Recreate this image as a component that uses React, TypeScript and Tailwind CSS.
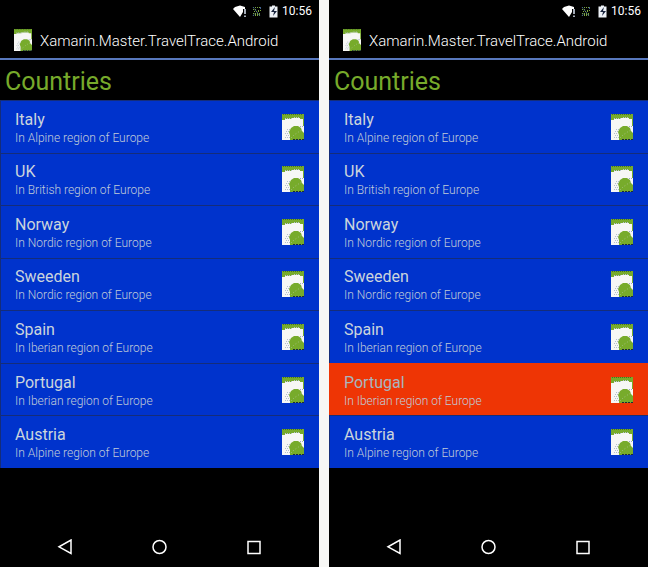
const countries = [
  { name: 'Italy', region: 'Alpine' },
  { name: 'UK', region: 'British' },
  { name: 'Norway', region: 'Nordic' },
  { name: 'Sweeden', region: 'Nordic' },
  { name: 'Spain', region: 'Iberian' },
  { name: 'Portugal', region: 'Iberian' },
  { name: 'Austria', region: 'Alpine' },
];

function AppIcon({ className }: { className: string }) {
  return (
    <svg viewBox="0 0 22 26" preserveAspectRatio="none" className={className} aria-hidden="true">
      <path d="M0 0h22v26H0z" fill="#f7f7f5" />
      <path d="M0 0h22v12h-1V5h-3V4H9v1H3v1H0z" fill="#77ab2b" />
      <path d="M8 26v-5l-1-3 2-4 3-2h4l3 2 1 3 2 2v7z" fill="#77ab2b" />
      <path d="M1 .5h20" stroke="#48721f" strokeDasharray="1 1" />
      <path d="M3 4.500h7M12 3.500h5" stroke="#b7c5d2" strokeDasharray="1 1" />
      <path d="M5 15.500h3M4 17.500h3M3 19.500h4M4 21.500h3M3 23.500h5" stroke="#b3bfce" strokeDasharray="1 1" />
      <path d="M9 24l3-3 3-2 3-2 3-1" fill="none" stroke="#a3bf82" strokeDasharray="1 2" />
      <path d="M18 12.500h3" stroke="#9cabc2" strokeDasharray="1 1" />
      <path d="M11 25.500h11" stroke="#1b2a3a" strokeDasharray="2 1" />
    </svg>
  );
}

function StatusBar() {
  return (
    <div className="flex h-[22px] items-center justify-end pr-[7px] text-white">
      <svg viewBox="0 0 46 14" className="mr-[3px] h-[14px] w-[46px]" aria-hidden="true">
        <path d="M0 5l2-2 5-1.500 5 1.500v2h-2v3l-3 5z" fill="#fff" />
        <path d="M12 5v5M12 11.500v1.500" stroke="#dce5f4" strokeWidth="1.500" />
        <path d="M20 3.500h7M20 5.500h4M21 7.500h5M20 9.500h7M20 11.500h8M25 6.500h3M22 10.500h5" stroke="#7ba640" strokeDasharray="1 1" />
        <path d="M20 3l7 9M20 12l2-3M27.500 3v3" fill="none" stroke="#40618c" strokeDasharray="2 1" />
        <path d="M39 1.500h3v1h2.500v11h-8v-11H39z" fill="#eef2f7" />
        <path d="M42 3l-4 5h3l-1 4 4-5h-3z" fill="#18233c" />
      </svg>
      <time className="text-xs leading-4">10:56</time>
    </div>
  );
}

function NavigationBar() {
  const button = 'flex size-4 items-center justify-center';
  return (
    <nav aria-label="System" className="mt-auto flex h-10 items-center justify-between px-[57px]">
      <button type="button" aria-label="Back" className={button}>
        <svg viewBox="0 0 16 16" className="size-4"><path d="M14 1v13.500L2 7.800z" fill="none" stroke="#fff" strokeWidth="1.500" /></svg>
      </button>
      <button type="button" aria-label="Home" className={button}>
        <svg viewBox="0 0 16 16" className="size-4"><circle cx="7.500" cy="8" r="6.500" fill="none" stroke="#fff" strokeWidth="1.500" /></svg>
      </button>
      <button type="button" aria-label="Recent apps" className={button}>
        <svg viewBox="0 0 16 16" className="size-4"><path d="M2 2.500h12v12H2z" fill="none" stroke="#fff" strokeWidth="1.500" /></svg>
      </button>
    </nav>
  );
}

function Phone({ selected }: { selected?: string }) {
  return (
    <section className="flex min-w-0 flex-1 flex-col bg-black">
      <StatusBar />
      <header className="flex h-[38px] items-center gap-2 border-b-2 border-[#5878bd] pl-[14px] text-white">
        <AppIcon className="h-[22px] w-[18px] shrink-0" />
        <span className="truncate pt-px text-[15px] leading-5 font-light">Xamarin.Master.TravelTrace.Android</span>
      </header>
      <h1 className="flex h-10 items-center px-[5px] pt-1 text-[25px] leading-8 text-[#77aa2b]">Countries</h1>
      <ul className="grid h-[368px] auto-rows-fr">
        {countries.map(({ name, region }) => (
          <li key={name} className="flex">
            <button
              type="button"
              aria-pressed={name === selected}
              className={`flex w-full items-center justify-between border-t border-l pr-[15px] pl-[14px] text-left ${
                name === selected ? 'border-[#ee3505] bg-[#ee3505] text-[#a9b6bf]' : 'border-[#152d79] bg-[#0033cc] text-[#cbd5dc]'
              }`}
            >
              <span className="flex flex-col pt-[2px]">
                <span className="text-base leading-5">{name}</span>
                <span className="text-xs leading-4 font-light text-[#c0ccd8]">In {region} region of Europe</span>
              </span>
              <AppIcon className="h-[26px] w-[22px] shrink-0" />
            </button>
          </li>
        ))}
      </ul>
      <NavigationBar />
    </section>
  );
}

export default function App() {
  return (
    <main className="flex min-h-screen gap-[10px] bg-[#f7f7f5] font-[Roboto,sans-serif]">
      <Phone />
      <Phone selected="Portugal" />
    </main>
  );
}
